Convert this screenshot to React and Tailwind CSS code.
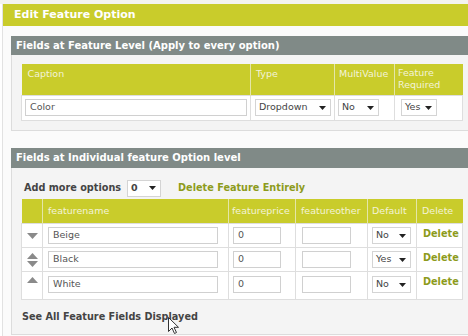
import React from 'react'

const Select = ({ value, w }) => (
  <div
    className={`flex items-center justify-between h-[17px] bg-white border border-[#d4d4d4] pl-[3px] pr-[4px] text-[9.5px] text-[#444] ${w}`}
  >
    <span>{value}</span>
    <svg width="7" height="4" viewBox="0 0 7 4">
      <path d="M0 0h7L3.5 4z" fill="#222" />
    </svg>
  </div>
)

const Input = ({ value, w }) => (
  <div
    className={`flex items-center h-[17px] bg-white border border-[#d0d0d0] pl-[4px] text-[9.5px] text-[#555] ${w}`}
  >
    {value}
  </div>
)

const Arrows = ({ up, down }) => (
  <div className="flex flex-col items-center gap-[2px]">
    {up && (
      <svg width="11" height="6" viewBox="0 0 11 6">
        <path d="M0 6h11L5.5 0z" fill="#8a8a8a" />
      </svg>
    )}
    {down && (
      <svg width="11" height="6" viewBox="0 0 11 6">
        <path d="M0 0h11L5.5 6z" fill="#8a8a8a" />
      </svg>
    )}
  </div>
)

const options = [
  { name: 'Beige', def: 'No', up: false, down: true },
  { name: 'Black', def: 'Yes', up: true, down: true },
  { name: 'White', def: 'No', up: true, down: false },
]

export default function App() {
  return (
    <div
      className="relative w-[468px] h-[336px] overflow-hidden bg-white"
      style={{ fontFamily: '"DejaVu Sans", Verdana, sans-serif' }}
    >
      <div className="h-[4px] bg-[#f3f3ef]" />
      <div className="ml-[2px] w-[480px] h-[340px] border-l border-[#e2e2e2] bg-[#fbfbfb]">
        {/* Header */}
        <div className="h-[22px] bg-[#c9cc2b] flex items-center pl-[11px] text-[11px] font-bold text-white">
          Edit Feature Option
        </div>

        {/* Section 1 */}
        <div className="mt-[10px] ml-[8px] w-[462px]">
          <div className="h-[19px] bg-[#808a87] flex items-center pl-[5px] text-[10px] font-bold text-white">
            Fields at Feature Level (Apply to every option)
          </div>
          <div className="bg-[#f4f4f4] border border-t-0 border-[#dcdcdc] px-[9px] pt-[9px] pb-[9px]">
            <table className="w-[442px] border-collapse text-[9.5px]">
              <thead>
                <tr className="bg-[#c9cc2b] text-[#f3f3d9] h-[31px]">
                  <th className="w-[229px] font-normal text-left align-top pt-[3px] pl-[6px] border-r border-[#e4e6a8]">Caption</th>
                  <th className="w-[84px] font-normal text-left align-top pt-[3px] pl-[5px] border-r border-[#e4e6a8]">Type</th>
                  <th className="w-[60px] font-normal text-left align-top pt-[3px] pl-[4px] border-r border-[#e4e6a8]">MultiValue</th>
                  <th className="font-normal text-left align-top pt-[3px] pl-[3px] leading-[12px]">Feature<br />Required</th>
                </tr>
              </thead>
              <tbody>
                <tr className="bg-white h-[25px]">
                  <td className="pl-[3px] border border-[#dedede]"><Input value="Color" w="w-[222px]" /></td>
                  <td className="pl-[4px] border border-[#dedede]"><Select value="Dropdown" w="w-[76px]" /></td>
                  <td className="pl-[3px] border border-[#dedede]"><Select value="No" w="w-[41px]" /></td>
                  <td className="pl-[6px] border border-[#dedede]"><Select value="Yes" w="w-[36px]" /></td>
                </tr>
              </tbody>
            </table>
          </div>
        </div>

        {/* Section 2 */}
        <div className="mt-[17px] ml-[8px] w-[462px]">
          <div className="h-[20px] bg-[#808a87] flex items-center pl-[5px] text-[10px] font-bold text-white">
            Fields at Individual feature Option level
          </div>
          <div className="bg-[#f4f4f4] border border-t-0 border-[#dcdcdc] px-[9px] pt-[12px] pb-[9px]">
            <div className="flex items-center h-[17px] pl-[3px] text-[9.7px] font-bold">
              <span className="text-[#444]">Add more options</span>
              <div className="ml-[6px]"><Select value="0" w="w-[34px]" /></div>
              <span className="ml-[17px] text-[#8d9b1c]">Delete Feature Entirely</span>
            </div>
            <table className="mt-[2px] w-[442px] border-collapse text-[9.5px]">
              <thead>
                <tr className="bg-[#c9cc2b] text-[#f3f3d9] h-[25px]">
                  <th className="w-[21px] border-r border-[#e4e6a8]" />
                  <th className="w-[186px] font-normal text-left pl-[5px] border-r border-[#e4e6a8]">featurename</th>
                  <th className="w-[67px] font-normal text-left pl-[3px] border-r border-[#e4e6a8]">featureprice</th>
                  <th className="w-[72px] font-normal text-left pl-[5px] border-r border-[#e4e6a8]">featureother</th>
                  <th className="w-[49px] font-normal text-left pl-[4px] border-r border-[#e4e6a8]">Default</th>
                  <th className="font-normal text-left pl-[5px]">Delete</th>
                </tr>
              </thead>
              <tbody>
                {options.map((o, i) => (
                  <tr key={o.name} className={`bg-white ${i === 2 ? 'h-[28px]' : 'h-[24px]'}`}>
                    <td className={`border border-[#dedede] ${i === 2 ? 'align-top pt-[5px]' : ''}`}>
                      <Arrows up={o.up} down={o.down} />
                    </td>
                    <td className={`pl-[5px] border border-[#dedede] ${i === 2 ? 'align-top pt-[4px]' : ''}`}>
                      <Input value={o.name} w="w-[170px]" />
                    </td>
                    <td className={`pl-[4px] border border-[#dedede] ${i === 2 ? 'align-top pt-[4px]' : ''}`}>
                      <Input value="0" w="w-[48px]" />
                    </td>
                    <td className={`pl-[6px] border border-[#dedede] ${i === 2 ? 'align-top pt-[4px]' : ''}`}>
                      <Input value="" w="w-[49px]" />
                    </td>
                    <td className={`pl-[4px] border border-[#dedede] ${i === 2 ? 'align-top pt-[4px]' : ''}`}>
                      <Select value={o.def} w="w-[39px]" />
                    </td>
                    <td className="pl-[6px] border border-[#dedede] font-bold text-[9.7px] text-[#8d9b1c] align-top pt-[3px]">
                      Delete
                    </td>
                  </tr>
                ))}
              </tbody>
            </table>
            <div className="mt-[10px] pl-[1px] text-[9.7px] font-bold text-[#444]">
              See All Feature Fields Displayed
            </div>
          </div>
        </div>
      </div>

      {/* mouse cursor */}
      <svg className="absolute left-[168px] top-[317px]" width="11" height="17" viewBox="0 0 11 17">
        <path d="M0.5 0.5v14l3.5-3.5 2.5 5.5 2-1-2.5-5.2h4.5z" fill="#fff" stroke="#333" strokeWidth="1" strokeLinejoin="round" />
      </svg>
    </div>
  )
}
